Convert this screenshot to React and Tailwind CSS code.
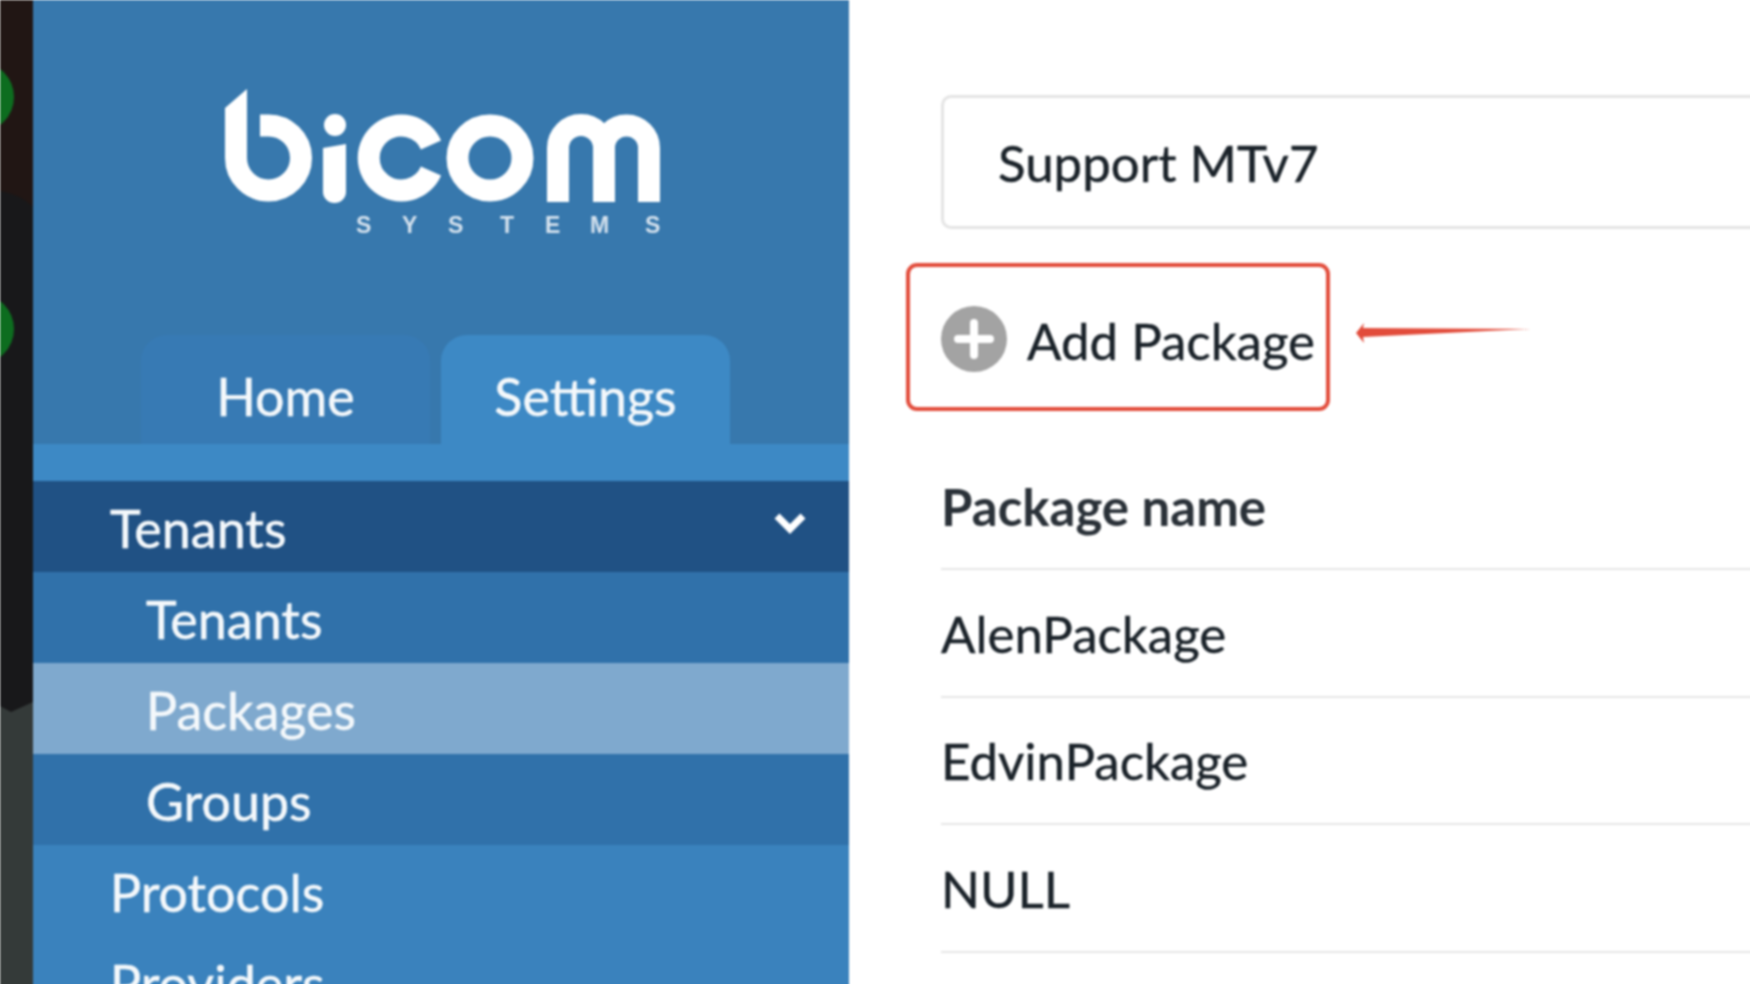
import React from 'react';

const BicomLogo = () => (
  <svg viewBox="225 85 440 150" className="w-[440px] h-[150px]">
    <g fill="none" stroke="#ffffff" strokeWidth="22">
      {/* b bowl */}
      <path d="M236 106 V156 A32.5 32.5 0 1 0 268 123.5 H260" />
      {/* c */}
      <path d="M431 143 A32.5 32.5 0 1 0 431 169" />
      {/* o */}
      <circle cx="490" cy="156" r="32.5" />
      {/* m */}
      <path d="M558 200 V146 A23 23 0 0 1 604 146 V200 M604 146 A22.5 22.5 0 0 1 649 146 V200" />
    </g>
    <path d="M225 106 L247 87 V120 H225 Z" fill="#ffffff" />
    <circle cx="335" cy="123" r="11" fill="#ffffff" />
    <path d="M323 146 L346 142 V190 A11.5 11 0 0 1 323 190 Z" fill="#ffffff" />
    <text x="356 402 448 500 545 590 645" y="231" fontSize="23" fontWeight="700" fontFamily="'Liberation Sans', sans-serif" fill="#d5e2ee">
      SYSTEMS
    </text>
  </svg>
);

const MenuRow = ({ label, className, indent, chevron }) => (
  <div className={`h-[91px] shrink-0 flex items-center justify-between text-[52px] text-[#f4f8fb] [-webkit-text-stroke:0.5px] ${indent ? 'pl-[113px]' : 'pl-[77px]'} pr-[42px] ${className}`}>
    <span className="pt-[2px]">{label}</span>
    {chevron && (
      <svg viewBox="0 0 34 24" className="w-[34px] h-[24px] mb-[8px]">
        <path d="M4 5 L17 18 L30 5" fill="none" stroke="#ffffff" strokeWidth="7" />
      </svg>
    )}
  </div>
);

const PackageRow = ({ name }) => (
  <div className="h-[127.5px] flex items-center pt-[2px] border-b-2 border-[#e6e6e6] text-[51px] text-[#1a2229] [-webkit-text-stroke:0.4px]">{name}</div>
);

export default function App() {
  return (
    <div className="h-[984px] w-[1750px] overflow-hidden bg-white">
      <div className="h-[994px] w-[1760px] flex bg-white font-['Lato',sans-serif] blur-[0.9px]">
        {/* slice of the desktop behind the window */}
        <div className="w-[33px] shrink-0">
          <svg viewBox="0 0 33 994" className="w-[33px] h-[994px]">
            <rect width="33" height="994" fill="#18181a" />
            <path d="M0 0 H33 V207 Q20 194 0 191 Z" fill="#211614" />
            <path d="M0 706 L11 712 L33 702 V994 H0 Z" fill="#343a39" />
            <circle cx="-21" cy="97" r="35" fill="#0d6d1f" />
            <circle cx="-21" cy="329" r="35" fill="#0d6d1f" />
          </svg>
        </div>

        <aside className="w-[816px] shrink-0 flex flex-col bg-[#3778ad] overflow-hidden">
          <div className="pt-[87px] pl-[8px] h-[335px] shrink-0 flex justify-center">
            <BicomLogo />
          </div>
          <div className="h-[109px] shrink-0 flex gap-[11px] pl-[108px] text-[52px] text-[#f4f8fb] [-webkit-text-stroke:0.5px]">
            <div className="w-[289px] flex items-center justify-center pt-[12px] rounded-t-[26px] bg-[#377ab4]">Home</div>
            <div className="w-[289px] flex items-center justify-center pt-[12px] rounded-t-[26px] bg-[#3d89c5]">Settings</div>
          </div>
          <div className="h-[37px] shrink-0 bg-[#3d89c5]" />
          <MenuRow label="Tenants" className="bg-[#205184]" chevron />
          <MenuRow label="Tenants" className="bg-[#3071aa]" indent />
          <MenuRow label="Packages" className="bg-[#7fa9ce]" indent />
          <MenuRow label="Groups" className="bg-[#3071aa]" indent />
          <div className="flex-1 bg-[#3a82bd]">
            <MenuRow label="Protocols" />
            <MenuRow label="Providers" />
          </div>
        </aside>

        <main className="relative flex-1 pl-[92px] pt-[95px] overflow-hidden">
          <div className="w-[1000px] h-[134px] flex items-center pl-[54px] pt-[3px] rounded-[10px] border-[3px] border-[#e4e4e4] text-[51px] text-[#1a2229] [-webkit-text-stroke:0.4px]">
            Support MTv7
          </div>
          <div className="mt-[34px] ml-[-35px] w-[424px] h-[148px] flex items-center gap-[20px] pl-[31px] rounded-[11px] border-4 border-[#e24c3b] text-[51px] text-[#1a2229] [-webkit-text-stroke:0.4px]">
            <svg viewBox="0 0 66 66" className="w-[66px] h-[66px] shrink-0 mt-[3px]">
              <circle cx="33" cy="33" r="33" fill="#a3a3a3" />
              <path d="M33 17 V49 M17 33 H49" stroke="#ffffff" strokeWidth="8" strokeLinecap="round" />
            </svg>
            <span className="whitespace-nowrap pt-[9px]">Add Package</span>
          </div>
          <div className="w-[1000px] mt-[35px]">
            <div className="h-[124px] flex items-center border-b-2 border-[#e6e6e6] text-[51px] font-bold text-[#2a3138]">Package name</div>
            <PackageRow name="AlenPackage" />
            <PackageRow name="EdvinPackage" />
            <PackageRow name="NULL" />
          </div>
          {/* annotation arrow */}
          <svg viewBox="0 0 176 22" className="absolute left-[507px] top-[322px] w-[176px] h-[22px]">
            <path d="M0 11 L8 1 L7 6 L175 7 L7 15 L8 21 Z" fill="#e24c3b" />
          </svg>
        </main>
      </div>
    </div>
  );
}
